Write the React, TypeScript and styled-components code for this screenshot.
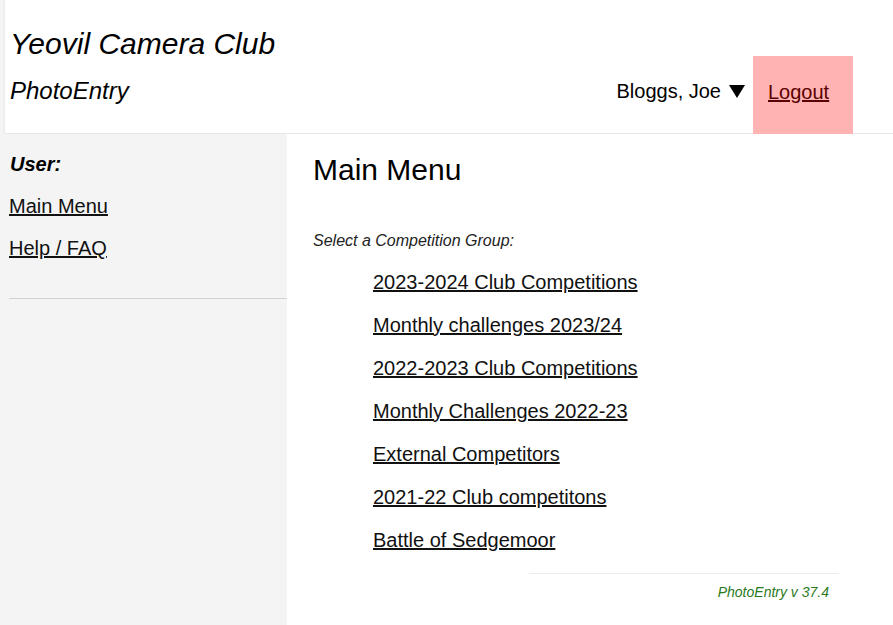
import React from 'react';
import styled, { createGlobalStyle } from 'styled-components';

const GlobalStyle = createGlobalStyle`
  html, body {
    margin: 0;
    padding: 0;
    background: #f4f4f4;
    font-family: 'Liberation Sans', Arial, sans-serif;
    color: #000;
  }
  a {
    color: #111;
  }
`;

const Page = styled.div`
  width: 893px;
  height: 625px;
  overflow: hidden;
  display: flex;
  flex-direction: column;
`;

const Header = styled.header`
  margin-left: 5px;
  height: 133px;
  background: #fff;
  border-bottom: 1px solid #e8e8e8;
  box-shadow: -1px 0 2px rgba(0, 0, 0, 0.05);
  display: flex;
  justify-content: space-between;
`;

const Brand = styled.div`
  padding: 26px 0 0 5px;
`;

const Title = styled.h1`
  margin: 0;
  font-size: 30px;
  font-weight: 400;
  font-style: italic;
  line-height: 36px;
`;

const Subtitle = styled.h2`
  margin: 15px 0 0;
  font-size: 24px;
  font-weight: 400;
  font-style: italic;
  line-height: 28px;
`;

const UserBar = styled.div`
  display: flex;
  align-items: flex-end;
  margin-right: 40px;
`;

const UserMenu = styled.div`
  height: 78px;
  box-sizing: border-box;
  padding: 0 8px 6px 0;
  display: flex;
  align-items: center;
  gap: 8px;
  font-size: 20px;
`;

const Caret = styled.span`
  width: 0;
  height: 0;
  border-left: 8px solid transparent;
  border-right: 8px solid transparent;
  border-top: 13px solid #000;
`;

const LogoutBox = styled.div`
  width: 100px;
  height: 78px;
  background: #ffb3b3;
  display: flex;
  align-items: center;
  box-sizing: border-box;
  padding: 0 0 6px 15px;
  margin-bottom: -1px;
  font-size: 20px;

  a {
    color: #5a0000;
  }
`;

const Body = styled.div`
  flex: 1;
  display: grid;
  grid-template-columns: 287px 1fr;
`;

const Sidebar = styled.aside`
  background: #f4f4f4;
  padding: 18px 0 0 9px;
`;

const SideLabel = styled.div`
  font-size: 20px;
  font-weight: 700;
  font-style: italic;
  padding-left: 1px;
  line-height: 24px;
`;

const SideLink = styled.a`
  display: block;
  font-size: 20px;
  line-height: 24px;
  margin-top: 18px;
`;

const SideRule = styled.hr`
  margin: 38px 0 0;
  border: none;
  border-top: 1px solid #d2d2d2;
`;

const Main = styled.main`
  background: #fff;
  padding: 18px 0 0 26px;
  display: flex;
  flex-direction: column;
`;

const Heading = styled.h2`
  margin: 0;
  font-size: 30px;
  font-weight: 400;
  line-height: 36px;
`;

const Prompt = styled.p`
  margin: 44px 0 0;
  font-size: 16px;
  font-style: italic;
  color: #222;
`;

const GroupList = styled.ul`
  list-style: none;
  margin: 20px 0 0;
  padding: 0 0 0 60px;
  display: flex;
  flex-direction: column;
  gap: 19px;
`;

const GroupLink = styled.a`
  font-size: 20px;
  line-height: 24px;
`;

const Footer = styled.div`
  margin: 21px 54px 0 auto;
  width: 310px;
  border-top: 1px solid #ececec;
  padding: 10px 10px 0 0;
  box-sizing: border-box;
  text-align: right;
  font-size: 14px;
  font-style: italic;
  color: #2b7a1e;
`;

const groups = [
  '2023-2024 Club Competitions',
  'Monthly challenges 2023/24',
  '2022-2023 Club Competitions',
  'Monthly Challenges 2022-23',
  'External Competitors',
  '2021-22 Club competitons',
  'Battle of Sedgemoor',
];

const App = () => (
  <Page>
    <GlobalStyle />
    <Header>
      <Brand>
        <Title>Yeovil Camera Club</Title>
        <Subtitle>PhotoEntry</Subtitle>
      </Brand>
      <UserBar>
        <UserMenu>
          Bloggs, Joe <Caret />
        </UserMenu>
        <LogoutBox>
          <a href="#">Logout</a>
        </LogoutBox>
      </UserBar>
    </Header>
    <Body>
      <Sidebar>
        <SideLabel>User:</SideLabel>
        <SideLink href="#">Main Menu</SideLink>
        <SideLink href="#">Help / FAQ</SideLink>
        <SideRule />
      </Sidebar>
      <Main>
        <Heading>Main Menu</Heading>
        <Prompt>Select a Competition Group:</Prompt>
        <GroupList>
          {groups.map((g) => (
            <li key={g}>
              <GroupLink href="#">{g}</GroupLink>
            </li>
          ))}
        </GroupList>
        <Footer>PhotoEntry v 37.4</Footer>
      </Main>
    </Body>
  </Page>
);

export default App;
